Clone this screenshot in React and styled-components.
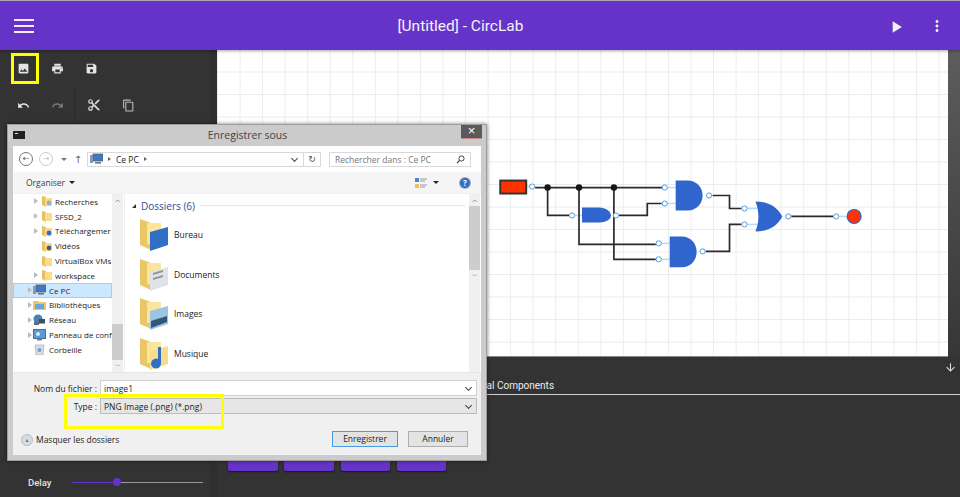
import React from "react";
import styled, { createGlobalStyle } from "styled-components";

const GlobalStyle = createGlobalStyle`
  html, body { margin: 0; padding: 0; background: #333; }
  * { box-sizing: border-box; }
`;

const PURPLE = "#6633c9";
const GATE = "#2f65cc";

const icons = {
  image: "M21 19V5c0-1.1-.9-2-2-2H5c-1.1 0-2 .9-2 2v14c0 1.1.9 2 2 2h14c1.1 0 2-.9 2-2zM8.5 13.5l2.5 3.01L14.5 12l4.5 6H5l3.5-4.5z",
  print: "M19 8H5c-1.66 0-3 1.34-3 3v6h4v4h12v-4h4v-6c0-1.66-1.34-3-3-3zm-3 11H8v-5h8v5zm3-7c-.55 0-1-.45-1-1s.45-1 1-1 1 .45 1 1-.45 1-1 1zm-1-9H6v4h12V3z",
  save: "M17 3H5c-1.11 0-2 .9-2 2v14c0 1.1.89 2 2 2h14c1.1 0 2-.9 2-2V7l-4-4zm-5 16c-1.66 0-3-1.34-3-3s1.34-3 3-3 3 1.34 3 3-1.34 3-3 3zm3-10H5V5h10v4z",
  undo: "M12.5 8c-2.65 0-5.05.99-6.9 2.6L2 7v9h9l-3.62-3.62c1.39-1.16 3.16-1.88 5.12-1.88 3.54 0 6.55 2.31 7.6 5.5l2.37-.78C21.08 11.03 17.15 8 12.5 8z",
  redo: "M18.4 10.6C16.55 8.99 14.15 8 11.5 8c-4.65 0-8.58 3.03-9.96 7.22L3.9 16c1.05-3.19 4.05-5.5 7.6-5.5 1.95 0 3.73.72 5.12 1.88L13 16h9V7l-3.6 3.6z",
  cut: "M9.64 7.64c.23-.5.36-1.05.36-1.64 0-2.21-1.79-4-4-4S2 3.79 2 6s1.79 4 4 4c.59 0 1.14-.13 1.64-.36L10 12l-2.36 2.36C7.14 14.13 6.59 14 6 14c-2.21 0-4 1.79-4 4s1.79 4 4 4 4-1.79 4-4c0-.59-.13-1.14-.36-1.64L12 14l7 7h3v-1L9.64 7.64zM6 8c-1.1 0-2-.89-2-2s.9-2 2-2 2 .89 2 2-.9 2-2 2zm0 12c-1.1 0-2-.89-2-2s.9-2 2-2 2 .89 2 2-.9 2-2 2zm6-7.5c-.28 0-.5-.22-.5-.5s.22-.5.5-.5.5.22.5.5-.22.5-.5.5zM19 3l-6 6 2 2 7-7V3z",
  copy: "M16 1H4c-1.1 0-2 .9-2 2v14h2V3h12V1zm3 4H8c-1.1 0-2 .9-2 2v14c0 1.1.9 2 2 2h11c1.1 0 2-.9 2-2V7c0-1.1-.9-2-2-2zm0 16H8V7h11v14z",
  play: "M8 5v14l11-7z",
  more: "M12 8c1.1 0 2-.9 2-2s-.9-2-2-2-2 .9-2 2 .9 2 2 2zm0 2c-1.1 0-2 .9-2 2s.9 2 2 2 2-.9 2-2-.9-2-2-2zm0 6c-1.1 0-2 .9-2 2s.9 2 2 2 2-.9 2-2-.9-2-2-2z",
  down: "M20 12l-1.41-1.41L13 16.17V4h-2v12.17l-5.58-5.59L4 12l8 8 8-8z",
};

function Glyph({ name, size = 13, color = "#e4e4e4" }) {
  return (
    <svg width={size} height={size} viewBox="0 0 24 24" fill={color}>
      <path d={icons[name]} />
    </svg>
  );
}

function SmallFolder({ badge }) {
  return (
    <svg width="10" height="12" viewBox="0 0 10 12">
      <path d="M0 1 L4 2 V12 L0 10 Z" fill="#e8c060" />
      <path d="M3 3 H10 V11 H3 Z" fill="#f7dc8c" />
      {badge && <circle cx="7" cy="8" r="2.4" fill={badge} />}
    </svg>
  );
}

function PcIcon() {
  return (
    <svg width="13" height="12" viewBox="0 0 13 12">
      <rect x="3" y="1" width="10" height="7" fill="#3f78c4" stroke="#56606c" strokeWidth="0.8" />
      <rect x="0" y="2" width="3" height="8" fill="#8a97a5" />
      <rect x="5" y="9" width="6" height="1.6" fill="#707a85" />
    </svg>
  );
}

function LibraryIcon() {
  return (
    <svg width="13" height="12" viewBox="0 0 13 12">
      <path d="M0 2 H5 L6 3 H13 V11 H0 Z" fill="#efc46a" />
      <rect x="2" y="5" width="9" height="5" fill="#6aa5dc" />
    </svg>
  );
}

function NetworkIcon() {
  return (
    <svg width="13" height="12" viewBox="0 0 13 12">
      <circle cx="5" cy="5" r="4.5" fill="#4a7eb8" />
      <rect x="6" y="5" width="6" height="4.5" fill="#3b4f68" />
      <rect x="1" y="8" width="5" height="3" fill="#5b6b7e" />
    </svg>
  );
}

function PanelIcon() {
  return (
    <svg width="13" height="12" viewBox="0 0 13 12">
      <rect x="0.5" y="0.5" width="12" height="9" fill="#5a9ad8" stroke="#4d6f95" />
      <circle cx="5" cy="5" r="2" fill="#d7e9f8" />
      <rect x="4" y="10" width="5" height="1.5" fill="#76808c" />
    </svg>
  );
}

function BinIcon() {
  return (
    <svg width="13" height="12" viewBox="0 0 13 12">
      <path d="M2 2 H11 L10 12 H3 Z" fill="#d8dee4" stroke="#9aa4ae" strokeWidth="0.6" />
      <circle cx="6.5" cy="7" r="2" fill="#6aa0d8" />
    </svg>
  );
}

function BigFolder({ inner, accent }) {
  return (
    <svg width="32" height="33" viewBox="0 0 32 33">
      <path d="M1 1 L12 5 V32 L1 27 Z" fill="#eac766" />
      <path d="M8 5 H22 V26 H8 Z" fill="#fbe59c" />
      <path d="M11 14 L29 9 V27 L11 33 Z" fill={inner} />
      {accent}
    </svg>
  );
}

function Circuit() {
  const wires = [
    "M535 188 H665",
    "M547.5 188 V216 H569",
    "M579 188 V245 H656",
    "M614 188 V260 H656",
    "M619 216 H647.5 V204 H662",
    "M713 196 H730 V209 H742",
    "M706 252 H730 V225 H742",
    "M792 217 H834",
  ];
  const ports = [
    [532, 187], [572, 216], [616, 216], [665, 188], [665, 204], [659, 244], [659, 260],
    [709.5, 196], [703, 252], [745, 209], [745, 225], [789, 217], [837, 217],
  ];
  const stubs = [
    "M667 188 H677", "M667 204 H677", "M661 244 H671", "M661 260 H671",
    "M747 209 H758", "M747 225 H760", "M574 216 H583", "M840 217 H850", "M527 187 H530",
  ];
  return (
    <CircuitSvg viewBox="217 50 731 307">
      {stubs.map((d) => (
        <path key={d} d={d} stroke="#b9dcf8" strokeWidth="1.6" fill="none" />
      ))}
      <rect x="500" y="181" width="26" height="13" fill="#ff3300" stroke="#333" strokeWidth="2" />
      <path d="M582 208 H599 C606 208 611 212 611 216 C611 220 606 223 599 223 H582 Z" fill={GATE} />
      <path d="M676 181 H688 C697 181 703 188 703 196 C703 204 697 211 688 211 H676 Z" fill={GATE} />
      <path d="M670 237 H682 C691 237 697 244 697 252.5 C697 261 691 268 682 268 H670 Z" fill={GATE} />
      <path d="M756 202 C770 202 778 208 783 217 C778 226 770 232 756 232 C760 222 760 212 756 202 Z" fill={GATE} />
      {wires.map((d) => (
        <path key={d} d={d} stroke="#2a2a2a" strokeWidth="1.7" fill="none" />
      ))}
      {[547.5, 579, 614].map((x) => (
        <circle key={x} cx={x} cy="188" r="3.2" fill="#151515" />
      ))}
      {ports.map(([x, y]) => (
        <circle key={`${x}-${y}`} cx={x} cy={y} r="2.6" fill="#fff" stroke="#4a90d9" strokeWidth="0.9" />
      ))}
      <circle cx="855" cy="217" r="7" fill="#ff3300" stroke={GATE} strokeWidth="1.2" />
    </CircuitSvg>
  );
}

const tree = [
  { label: "Recherches", indent: 21, icon: <SmallFolder badge="#9ab0c8" />, arrow: true },
  { label: "SFSD_2", indent: 21, icon: <SmallFolder />, arrow: true },
  { label: "Téléchargemer", indent: 21, icon: <SmallFolder badge="#2f6fc4" />, arrow: true },
  { label: "Vidéos", indent: 21, icon: <SmallFolder badge="#4a5a78" /> },
  { label: "VirtualBox VMs", indent: 21, icon: <SmallFolder /> },
  { label: "workspace", indent: 21, icon: <SmallFolder />, arrow: true },
  { label: "Ce PC", indent: 15, tight: true, icon: <PcIcon />, arrow: true, selected: true },
  { label: "Bibliothèques", indent: 15, tight: true, icon: <LibraryIcon />, arrow: true },
  { label: "Réseau", indent: 15, tight: true, icon: <NetworkIcon />, arrow: true },
  { label: "Panneau de conf", indent: 15, tight: true, icon: <PanelIcon />, arrow: true },
  { label: "Corbeille", indent: 15, tight: true, icon: <BinIcon /> },
];

const folders = [
  { label: "Bureau", inner: "#2f6fc4" },
  {
    label: "Documents",
    inner: "#dfe3e6",
    accent: <path d="M14 15 L24 12 V14 L14 17 Z M14 20 L24 17 V19 L14 22 Z" fill="#8c959c" />,
  },
  {
    label: "Images",
    inner: "#9cc4e4",
    accent: <path d="M12 24 L28 19 V25 L12 31 Z" fill="#2f5878" />,
  },
  {
    label: "Musique",
    inner: "#f7dc8c",
    accent: <path d="M19 10 H22 V26 A5 5 0 1 1 19 22 Z" fill="#2f6fc4" />,
  },
];

export default function App() {
  return (
    <Page>
      <GlobalStyle />
      <TopBar>
        <MenuButton>
          <span />
          <span />
          <span />
        </MenuButton>
        <Title>[Untitled] - CircLab</Title>
        <BarActions>
          <PlaySlot>
            <Glyph name="play" size={20} color="#eee" />
          </PlaySlot>
          <Glyph name="more" size={18} color="#eee" />
        </BarActions>
      </TopBar>

      <Body>
        <Sidebar>
          <ToolRow>
            <ToolButton><Glyph name="image" /></ToolButton>
            <ToolButton><Glyph name="print" /></ToolButton>
            <ToolButton><Glyph name="save" /></ToolButton>
          </ToolRow>
          <EditRow>
            <ToolButton><Glyph name="undo" /></ToolButton>
            <ToolButton><Glyph name="redo" color="#777" /></ToolButton>
            <ToolDivider />
            <ToolButton><Glyph name="cut" size={14} /></ToolButton>
            <ToolButton><Glyph name="copy" color="#bbb" /></ToolButton>
          </EditRow>
          <DelayRow>
            <DelayLabel>Delay</DelayLabel>
            <SliderFill />
            <SliderThumb />
            <SliderRest />
          </DelayRow>
        </Sidebar>

        <Workspace>
          <CanvasRow>
            <Canvas>
              <Circuit />
            </Canvas>
            <ScrollStrip />
          </CanvasRow>
          <BottomPanel>
            <CollapseRow>
              <Glyph name="down" size={13} color="#ddd" />
            </CollapseRow>
            <Tabs>
              <TabLabel>Logic Gates</TabLabel>
              <TabLabel>Input / Output</TabLabel>
              <TabLabel>Sequential Components</TabLabel>
            </Tabs>
            <Palette>
              <PaletteButton />
              <PaletteButton />
              <PaletteButton />
              <PaletteButton />
            </Palette>
          </BottomPanel>
        </Workspace>
      </Body>

      <Dialog>
        <DialogTitle>
          <TerminalIcon />
          <DialogName>Enregistrer sous</DialogName>
          <CloseButton>×</CloseButton>
        </DialogTitle>
        <DialogInner>
          <AddressRow>
            <NavCircle>←</NavCircle>
            <NavCircle $off>→</NavCircle>
            <TinyCaret />
            <UpArrow>↑</UpArrow>
            <PathBox>
              <PcIcon />
              <PathChevron />
              <span>Ce PC</span>
              <PathChevron />
              <PathEnd>
                <Chevron />
                <RefreshBox>↻</RefreshBox>
              </PathEnd>
            </PathBox>
            <SearchBox>
              <span>Rechercher dans : Ce PC</span>
              <svg width="9" height="9" viewBox="0 0 9 9">
                <circle cx="5.5" cy="3.5" r="2.6" fill="none" stroke="#444" />
                <path d="M3.6 5.4 L1 8" stroke="#444" strokeWidth="1.2" />
              </svg>
            </SearchBox>
          </AddressRow>

          <CommandRow>
            <OrganiseLabel>Organiser</OrganiseLabel>
            <TinyCaret $dark />
            <CommandEnd>
              <svg width="12" height="12" viewBox="0 0 12 12">
                <rect x="0" y="1" width="4" height="4" fill="#4a86c8" />
                <rect x="0" y="7" width="4" height="4" fill="#e8c060" />
                <path d="M5 2 H12 M5 4 H10 M5 8 H12 M5 10 H10" stroke="#999" />
              </svg>
              <ViewCaret $dark />
              <HelpIcon>?</HelpIcon>
            </CommandEnd>
          </CommandRow>

          <Browser>
            <TreePane>
              {tree.map((row) => (
                <TreeRow key={row.label} $indent={row.indent} $selected={row.selected}>
                  <TreeArrow $show={row.arrow} $tight={row.tight} />
                  {row.icon}
                  <TreeText>{row.label}</TreeText>
                </TreeRow>
              ))}
            </TreePane>
            <TreeScroll>
              <ScrollEnd>︿</ScrollEnd>
              <TreeThumb />
              <ScrollEnd>﹀</ScrollEnd>
            </TreeScroll>
            <FilesPane>
              <SectionHead>
                <SectionCaret />
                <SectionTitle>Dossiers (6)</SectionTitle>
                <SectionRule />
              </SectionHead>
              {folders.map((f) => (
                <FolderTile key={f.label}>
                  <BigFolder inner={f.inner} accent={f.accent} />
                  <span>{f.label}</span>
                </FolderTile>
              ))}
            </FilesPane>
            <FilesScroll>
              <ScrollEnd>︿</ScrollEnd>
              <FilesThumb />
              <ScrollEnd>﹀</ScrollEnd>
            </FilesScroll>
          </Browser>

          <SaveForm>
            <FormRow>
              <FormLabel>Nom du fichier :</FormLabel>
              <FieldBox>
                image1
                <Chevron />
              </FieldBox>
            </FormRow>
            <FormRow>
              <FormLabel>Type :</FormLabel>
              <FieldBox $select>
                PNG Image (.png) (*.png)
                <Chevron />
              </FieldBox>
            </FormRow>
            <ActionRow>
              <HideFolders>
                <HideBullet>▲</HideBullet>
                Masquer les dossiers
              </HideFolders>
              <DialogButton $primary>Enregistrer</DialogButton>
              <DialogButton>Annuler</DialogButton>
            </ActionRow>
          </SaveForm>
        </DialogInner>
      </Dialog>

      <ExportHighlight />
      <TypeHighlight />
    </Page>
  );
}

const Page = styled.div`
  position: relative;
  width: 960px;
  height: 497px;
  overflow: hidden;
  display: flex;
  flex-direction: column;
  background: #333;
  font-family: Roboto, "Liberation Sans", sans-serif;
`;

const TopBar = styled.header`
  height: 50px;
  flex: none;
  display: flex;
  align-items: center;
  background: ${PURPLE};
  border-top: 1px solid #a9a4b8;
  position: relative;
  z-index: 1;
  box-shadow: 0 1px 3px rgba(0, 0, 0, 0.35);
`;

const MenuButton = styled.div`
  width: 48px;
  flex: none;
  padding-left: 14px;
  display: flex;
  flex-direction: column;
  gap: 4px;
  span {
    display: block;
    width: 20px;
    height: 2px;
    background: #f1ecfa;
  }
`;

const Title = styled.h1`
  flex: 1;
  margin: 0;
  text-align: center;
  font-size: 15.5px;
  font-weight: 400;
  color: #f4f1fb;
`;

const BarActions = styled.div`
  width: 87px;
  flex: none;
  display: flex;
  align-items: center;
  gap: 22px;
  padding-left: 13px;
`;

const PlaySlot = styled.div`
  display: flex;
  margin-top: 3px;
`;

const Body = styled.div`
  flex: 1;
  display: flex;
  min-height: 0;
`;

const Sidebar = styled.aside`
  width: 217px;
  flex: none;
  display: flex;
  flex-direction: column;
  background: #333;
  border-right: 7px solid #2f2f2f;
`;

const ToolRow = styled.div`
  display: flex;
  align-items: center;
  padding: 0 6px;
  height: 36px;
`;

const EditRow = styled(ToolRow)`
  height: 38px;
`;

const ToolButton = styled.div`
  width: 34px;
  height: 30px;
  flex: none;
  display: flex;
  align-items: center;
  justify-content: center;
`;

const ToolDivider = styled.div`
  width: 1px;
  height: 32px;
  margin: 0 2px 0 0;
  background: #2a2a2a;
`;

const DelayRow = styled.div`
  margin-top: auto;
  height: 30px;
  display: flex;
  align-items: center;
  padding: 0 7px 0 28px;
`;

const DelayLabel = styled.span`
  width: 44px;
  flex: none;
  font-size: 9.5px;
  font-weight: 500;
  color: #e2e2e2;
`;

const SliderFill = styled.div`
  width: 41px;
  height: 1px;
  background: ${PURPLE};
`;

const SliderThumb = styled.div`
  width: 8px;
  height: 8px;
  flex: none;
  border-radius: 50%;
  background: ${PURPLE};
`;

const SliderRest = styled.div`
  flex: 1;
  height: 1px;
  background: #999;
`;

const Workspace = styled.main`
  flex: 1;
  min-width: 0;
  display: flex;
  flex-direction: column;
`;

const CanvasRow = styled.div`
  height: 307px;
  flex: none;
  display: flex;
`;

const Canvas = styled.div`
  flex: 1;
  background-color: #fff;
  background-image: linear-gradient(to right, #e9eef1 1px, transparent 1px),
    linear-gradient(to bottom, #e9ebed 1px, transparent 1px);
  background-size: 22.55px 22.5px;
  background-position: 0 -1px;
  border-bottom: 1px solid #8a8a8a;
`;

const CircuitSvg = styled.svg`
  display: block;
  width: 100%;
  height: 100%;
`;

const ScrollStrip = styled.div`
  width: 12px;
  flex: none;
  background: linear-gradient(to bottom, #5d5d5d 0, #363636 100%);
`;

const BottomPanel = styled.section`
  flex: 1;
  display: flex;
  flex-direction: column;
  background: #333;
`;

const CollapseRow = styled.div`
  height: 22px;
  display: flex;
  justify-content: flex-end;
  align-items: flex-start;
  padding: 4px 3px 0 0;
`;

const Tabs = styled.div`
  height: 16px;
  display: flex;
  gap: 22px;
  padding-left: 72px;
  border-bottom: 1px solid #cfcfcf;
`;

const TabLabel = styled.span`
  font-size: 10px;
  font-weight: 400;
  line-height: 14px;
  color: #eee;
  white-space: nowrap;
`;

const Palette = styled.div`
  display: flex;
  gap: 6.8px;
  padding: 26px 0 0 11px;
`;

const PaletteButton = styled.div`
  width: 49.5px;
  height: 50px;
  border-radius: 2px;
  background: ${PURPLE};
  box-shadow: 0 1px 2px rgba(0, 0, 0, 0.6);
`;

const Dialog = styled.div`
  position: absolute;
  left: 7px;
  top: 124px;
  width: 480px;
  height: 337px;
  display: flex;
  flex-direction: column;
  padding: 0 5px 5px;
  background: #cbcbcb;
  border: 1px solid #9d9d9d;
  box-shadow: 0 0 4px rgba(0, 0, 0, 0.5);
  font-family: "Open Sans", "Noto Sans", sans-serif;
  font-size: 8.5px;
  color: #222;
`;

const DialogTitle = styled.div`
  height: 21px;
  flex: none;
  display: flex;
  align-items: flex-start;
`;

const TerminalIcon = styled.div`
  width: 12px;
  height: 8px;
  margin-top: 6px;
  flex: none;
  background: #222;
  &::before {
    content: "";
    display: block;
    width: 3px;
    height: 1px;
    margin: 2px 0 0 2px;
    background: #ddd;
  }
`;

const DialogName = styled.div`
  flex: 1;
  padding-left: 9px;
  text-align: center;
  font-size: 10.5px;
  line-height: 21px;
  color: #444;
`;

const CloseButton = styled.div`
  width: 21px;
  height: 14px;
  margin-right: -1px;
  background: #5a5a5a;
  border-bottom: 1px solid #c88;
  color: #fff;
  font-family: "Liberation Sans", sans-serif;
  font-size: 13px;
  line-height: 12px;
  text-align: center;
`;

const DialogInner = styled.div`
  flex: 1;
  min-height: 0;
  display: flex;
  flex-direction: column;
  background: #f0f0f0;
`;

const AddressRow = styled.div`
  height: 26px;
  flex: none;
  display: flex;
  align-items: center;
  padding-left: 6px;
  background: #fff;
`;

const NavCircle = styled.div`
  width: 14px;
  height: 14px;
  margin-right: 6px;
  border: 1px solid ${(p) => (p.$off ? "#ccc" : "#777")};
  border-radius: 50%;
  color: ${(p) => (p.$off ? "#bbb" : "#555")};
  font-family: "DejaVu Sans", sans-serif;
  font-size: 8px;
  line-height: 12px;
  text-align: center;
`;

const TinyCaret = styled.div`
  width: 0;
  height: 0;
  margin: 0 0 0 ${(p) => (p.$dark ? "4px" : "2px")};
  border-left: 3px solid transparent;
  border-right: 3px solid transparent;
  border-top: 3px solid ${(p) => (p.$dark ? "#222" : "#777")};
`;

const ViewCaret = styled(TinyCaret)`
  margin-left: 6px;
`;

const UpArrow = styled.div`
  width: 12px;
  margin-left: 5px;
  color: #666;
  font-family: "DejaVu Sans", sans-serif;
  font-size: 10px;
  text-align: center;
`;

const PathBox = styled.div`
  width: 234px;
  height: 15px;
  margin-left: 3px;
  display: flex;
  align-items: center;
  gap: 5px;
  padding-left: 2px;
  border: 1px solid #d9d9d9;
`;

const PathChevron = styled.div`
  width: 0;
  height: 0;
  border-top: 2.5px solid transparent;
  border-bottom: 2.5px solid transparent;
  border-left: 3px solid #666;
`;

const PathEnd = styled.div`
  margin-left: auto;
  height: 100%;
  display: flex;
  align-items: center;
  gap: 6px;
`;

const Chevron = styled.div`
  width: 5px;
  height: 5px;
  margin-top: -2px;
  flex: none;
  border-right: 1px solid #444;
  border-bottom: 1px solid #444;
  transform: rotate(45deg);
`;

const RefreshBox = styled.div`
  width: 17px;
  height: 100%;
  border-left: 1px solid #d9d9d9;
  color: #555;
  font-family: "DejaVu Sans", sans-serif;
  font-size: 9px;
  line-height: 13px;
  text-align: center;
`;

const SearchBox = styled.div`
  width: 142px;
  height: 15px;
  margin-left: 8px;
  display: flex;
  align-items: center;
  justify-content: space-between;
  padding: 0 5px;
  border: 1px solid #d9d9d9;
  color: #777;
`;

const CommandRow = styled.div`
  height: 21px;
  flex: none;
  display: flex;
  align-items: center;
  padding-left: 13px;
  background: #f5f5f5;
`;

const OrganiseLabel = styled.span`
  color: #345;
`;

const CommandEnd = styled.div`
  margin-left: auto;
  display: flex;
  align-items: center;
  padding-right: 11px;
`;

const HelpIcon = styled.div`
  width: 10px;
  height: 10px;
  margin-left: 21px;
  border-radius: 50%;
  background: #2f6fc4;
  box-shadow: 0 0 0 1px #aab;
  color: #fff;
  font-size: 8px;
  font-weight: 700;
  line-height: 10px;
  text-align: center;
`;

const Browser = styled.div`
  height: 180px;
  flex: none;
  display: flex;
  background: #fff;
  border-bottom: 1px solid #e6e6e6;
  border-top: 1px solid #f0f0f0;
`;

const TreePane = styled.div`
  width: 99px;
  flex: none;
  overflow: hidden;
`;

const TreeRow = styled.div`
  height: 14.8px;
  display: flex;
  align-items: center;
  gap: 2px;
  padding-left: ${(p) => p.$indent}px;
  white-space: nowrap;
  background: ${(p) => (p.$selected ? "#cce8ff" : "transparent")};
  outline: ${(p) => (p.$selected ? "1px solid #99d1ff" : "none")};
  outline-offset: -1px;
  svg {
    flex: none;
  }
`;

const TreeArrow = styled.div`
  width: 0;
  height: 0;
  flex: none;
  margin-right: ${(p) => (p.$tight ? "-1px" : "2px")};
  border-top: 3px solid transparent;
  border-bottom: 3px solid transparent;
  border-left: 4px solid ${(p) => (p.$show ? "#bbb" : "transparent")};
`;

const TreeText = styled.span`
  flex: none;
  margin-left: 1px;
  font-size: 8px;
  color: #222;
`;

const TreeScroll = styled.div`
  width: 11px;
  flex: none;
  display: flex;
  flex-direction: column;
  background: #f0f0f0;
  margin-right: 1px;
`;

const ScrollEnd = styled.div`
  height: 12px;
  flex: none;
  color: #444;
  font-family: "DejaVu Sans", sans-serif;
  font-size: 6px;
  line-height: 12px;
  text-align: center;
`;

const TreeThumb = styled.div`
  height: 36px;
  flex: none;
  margin-top: auto;
  background: #cdcdcd;
`;

const FilesPane = styled.div`
  flex: 1;
  padding-left: 7px;
  overflow: hidden;
  border-left: 1px solid #f0f0f0;
`;

const SectionHead = styled.div`
  height: 21px;
  display: flex;
  align-items: center;
  padding: 2px 4px 0 0;
`;

const SectionCaret = styled.div`
  width: 0;
  height: 0;
  margin-right: 5px;
  border-left: 4px solid transparent;
  border-bottom: 4px solid #333;
`;

const SectionTitle = styled.span`
  font-size: 10px;
  color: #1f4fa0;
`;

const SectionRule = styled.div`
  flex: 1;
  height: 1px;
  margin-left: 5px;
  background: #e8e8e8;
`;

const FolderTile = styled.div`
  height: 39.6px;
  display: flex;
  align-items: center;
  gap: 3px;
  padding-left: 7px;
  span {
    font-size: 8.5px;
    color: #222;
  }
`;

const FilesScroll = styled(TreeScroll)`
  margin-right: 1px;
`;

const FilesThumb = styled.div`
  height: 64px;
  flex: none;
  background: #cdcdcd;
`;

const SaveForm = styled.div`
  flex: 1;
  display: flex;
  flex-direction: column;
  gap: 2px;
  padding: 7px 4px 0 0;
`;

const FormRow = styled.div`
  height: 16px;
  flex: none;
  display: flex;
  align-items: center;
`;

const FormLabel = styled.label`
  width: 87px;
  flex: none;
  text-align: right;
  padding-right: 3px;
  color: #222;
`;

const FieldBox = styled.div`
  flex: 1;
  height: 100%;
  display: flex;
  align-items: center;
  justify-content: space-between;
  padding: 0 5px 0 3px;
  background: ${(p) => (p.$select ? "#e6e6e6" : "#fff")};
  border: 1px solid ${(p) => (p.$select ? "#bcbcbc" : "#d0d0d0")};
`;

const ActionRow = styled.div`
  flex: none;
  display: flex;
  align-items: center;
  margin-top: 15px;
  padding: 0 9px 0 8px;
`;

const HideFolders = styled.div`
  flex: 1;
  display: flex;
  align-items: center;
  gap: 3px;
  margin-top: 1px;
  color: #222;
`;

const HideBullet = styled.span`
  width: 12px;
  height: 12px;
  border-radius: 50%;
  background: #d8dde4;
  border: 1px solid #b6bcc4;
  color: #5a7aa0;
  font-size: 5px;
  line-height: 10px;
  text-align: center;
`;

const DialogButton = styled.div`
  width: ${(p) => (p.$primary ? "66px" : "60px")};
  height: 16px;
  margin-left: ${(p) => (p.$primary ? "0" : "10px")};
  background: #e3e3e3;
  border: 1px solid ${(p) => (p.$primary ? "#4a9ae0" : "#adadad")};
  color: #222;
  line-height: 14px;
  text-align: center;
`;

const ExportHighlight = styled.div`
  position: absolute;
  left: 11px;
  top: 53px;
  width: 28px;
  height: 31px;
  border: 3px solid #ffff00;
`;

const TypeHighlight = styled.div`
  position: absolute;
  left: 64px;
  top: 394px;
  width: 160px;
  height: 35px;
  border: 3px solid #ffff00;
`;
